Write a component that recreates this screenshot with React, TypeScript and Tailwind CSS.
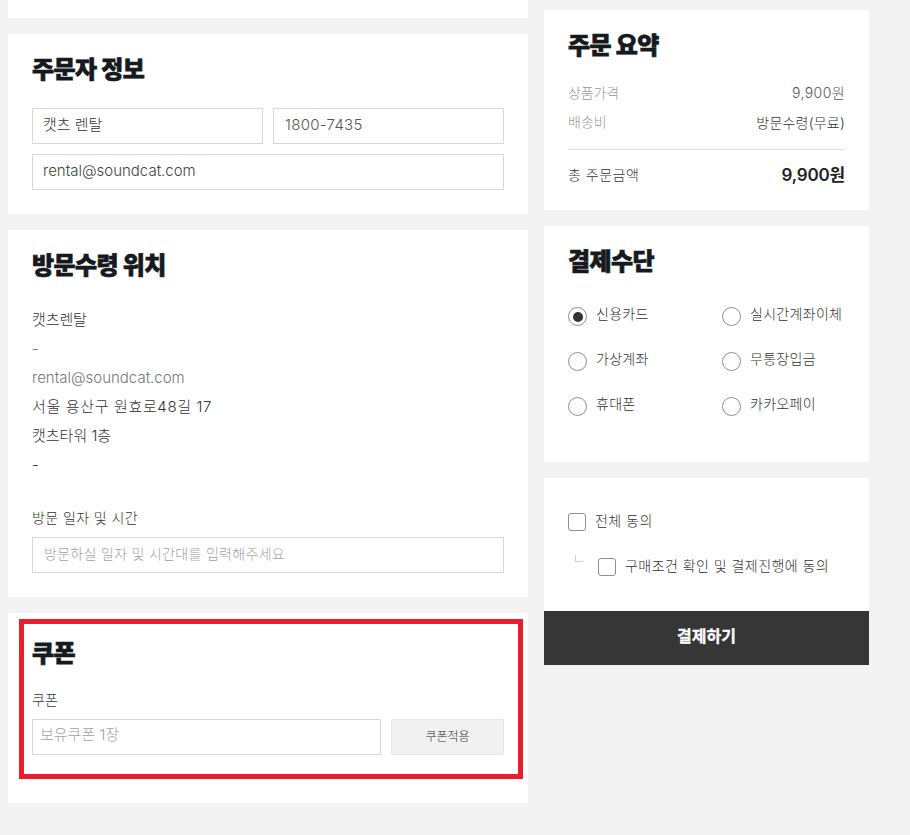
import React from "react";

const latin = "font-['Inter','Noto_Sans_CJK_KR',sans-serif]";
const title = "m-0 text-[24px] leading-[32px] font-black tracking-[-0.6px] text-[#16191d] [-webkit-text-stroke:0.7px_#16191d] font-['Noto_Sans_CJK_KR',sans-serif]";
const input = "h-[36px] border border-[#d8d8d8] bg-white flex items-center font-light min-w-0";

function Radio({ label, checked }: { label: string; checked?: boolean }) {
  return (
    <div className="flex items-start h-[45px]">
      <span className="mt-[3px] w-[19px] h-[19px] rounded-full border border-[#8f8f8f] flex items-center justify-center shrink-0">
        {checked && <span className="w-[10px] h-[10px] rounded-full bg-[#333]" />}
      </span>
      <span className="ml-[9px] text-[14px] leading-[20px] font-light text-[#333] whitespace-nowrap tracking-[0.3px]">{label}</span>
    </div>
  );
}

function Check({ label }: { label: string }) {
  return (
    <div className="flex items-center">
      <span className="w-[18px] h-[18px] rounded-[3px] border border-[#8f8f8f] shrink-0" />
      <span className="ml-[9px] -mt-[1px] text-[14px] leading-[20px] font-light text-[#333] whitespace-nowrap tracking-[0.45px]">{label}</span>
    </div>
  );
}

export default function App() {
  return (
    <div className={`${latin} w-[910px] h-[835px] overflow-hidden bg-[#f3f3f3] flex items-start`}>
      <div className="w-[520px] ml-[8px] flex flex-col gap-[16px]">
        <div className="h-[18px] bg-white" />

        <section className="h-[180px] bg-white px-[24px] pt-[18px]">
          <h2 className={title}>주문자 정보</h2>
          <div className="mt-[24px] grid grid-cols-2 gap-[10px]">
            <div className={`${input} pb-[1px] px-[10px] text-[15px] text-[#333]`}>캣츠 렌탈</div>
            <div className={`${input} pb-[1px] px-[11px] text-[15px] text-[#555] tracking-[0.3px]`}>1800-7435</div>
          </div>
          <div className={`${input} pb-[1px] mt-[10px] px-[10px] text-[15px] text-[#444]`}>rental@soundcat.com</div>
        </section>

        <section className="h-[367px] bg-white px-[24px] pt-[18px]">
          <h2 className={title}>방문수령 위치</h2>
          <div className="mt-[25px] flex flex-col text-[15px] leading-[29px] font-light text-[#333]">
            <div className="tracking-[-0.1px]">캣츠렌탈</div>
            <div className="text-[#777]">-</div>
            <div className="text-[#777]">rental@soundcat.com</div>
            <div className="tracking-[0.65px]">서울 용산구 원효로48길 17</div>
            <div>캣츠타워 1층</div>
            <div>-</div>
          </div>
          <div className="mt-[29px] text-[14px] leading-[20px] font-light text-[#333] tracking-[0.4px]">방문 일자 및 시간</div>
          <div className={`${input} pb-[3px] mt-[9px] px-[11px] text-[14px] text-[#a3a3a3] tracking-[0.3px]`}>방문하실 일자 및 시간대를 입력해주세요</div>
        </section>

        <section className="relative h-[190px] bg-white px-[24px] pt-[23px]">
          <h2 className={title}>쿠폰</h2>
          <div className="mt-[22px] text-[14px] leading-[20px] font-light text-[#333]">쿠폰</div>
          <div className="mt-[9px] flex gap-[10px]">
            <div className={`${input} pb-[3px] flex-1 px-[7px] text-[15px] text-[#a3a3a3]`}>보유쿠폰 1장</div>
            <div className="w-[113px] h-[36px] bg-[#f1f1f1] border border-[#e6e6e6] rounded-[2px] flex items-center justify-center text-[12px] font-light text-[#333]">쿠폰적용</div>
          </div>
          <div className="absolute left-[11px] top-[6px] w-[504px] h-[160px] border-[5px] border-[#e71f2b]" />
        </section>
      </div>

      <div className="w-[325px] ml-[16px] mt-[10px] flex flex-col gap-[16px]">
        <section className="h-[200px] bg-white px-[24px] pt-[18px]">
          <h2 className={title}>주문 요약</h2>
          <div className="mt-[23px] flex justify-between items-start text-[14px] leading-[20px] font-light">
            <span className="text-[#9a9a9a] tracking-[-0.1px]">상품가격</span>
            <span className="text-[#555] tracking-[0.4px]">9,900원</span>
          </div>
          <div className="mt-[9px] flex justify-between items-start text-[14px] leading-[20px] font-light">
            <span className="text-[#9a9a9a]">배송비</span>
            <span className="text-[#333] mt-[1px] tracking-[0.2px]">방문수령(무료)</span>
          </div>
          <div className="mt-[16px] border-t border-[#e2e2e2] pt-[13px] flex justify-between items-center">
            <span className="text-[14px] leading-[20px] font-light text-[#333] tracking-[0.5px]">총 주문금액</span>
            <span className="text-[17px] leading-[24px] font-semibold text-[#222] -tracking-[0.2px]">9,900원</span>
          </div>
        </section>

        <section className="h-[236px] bg-white px-[24px] pt-[18px]">
          <h2 className={title}>결제수단</h2>
          <div className="mt-[28px] grid grid-cols-[154px_1fr]">
            <Radio label="신용카드" checked />
            <Radio label="실시간계좌이체" />
            <Radio label="가상계좌" />
            <Radio label="무통장입금" />
            <Radio label="휴대폰" />
            <Radio label="카카오페이" />
          </div>
        </section>

        <div className="flex flex-col">
          <section className="h-[133px] bg-white px-[24px] pt-[34px]">
            <Check label="전체 동의" />
            <div className="relative mt-[26px] ml-[30px]">
              <span className="absolute -left-[23px] top-[-2px] w-[8px] h-[7px] border-l border-b border-[#cfcfcf]" />
              <Check label="구매조건 확인 및 결제진행에 동의" />
            </div>
          </section>
          <div className="h-[54px] bg-[#363636] flex items-center justify-center text-white text-[16px] font-bold pb-[4px] [-webkit-text-stroke:0.3px_#ffffff]">결제하기</div>
        </div>
      </div>
    </div>
  );
}
